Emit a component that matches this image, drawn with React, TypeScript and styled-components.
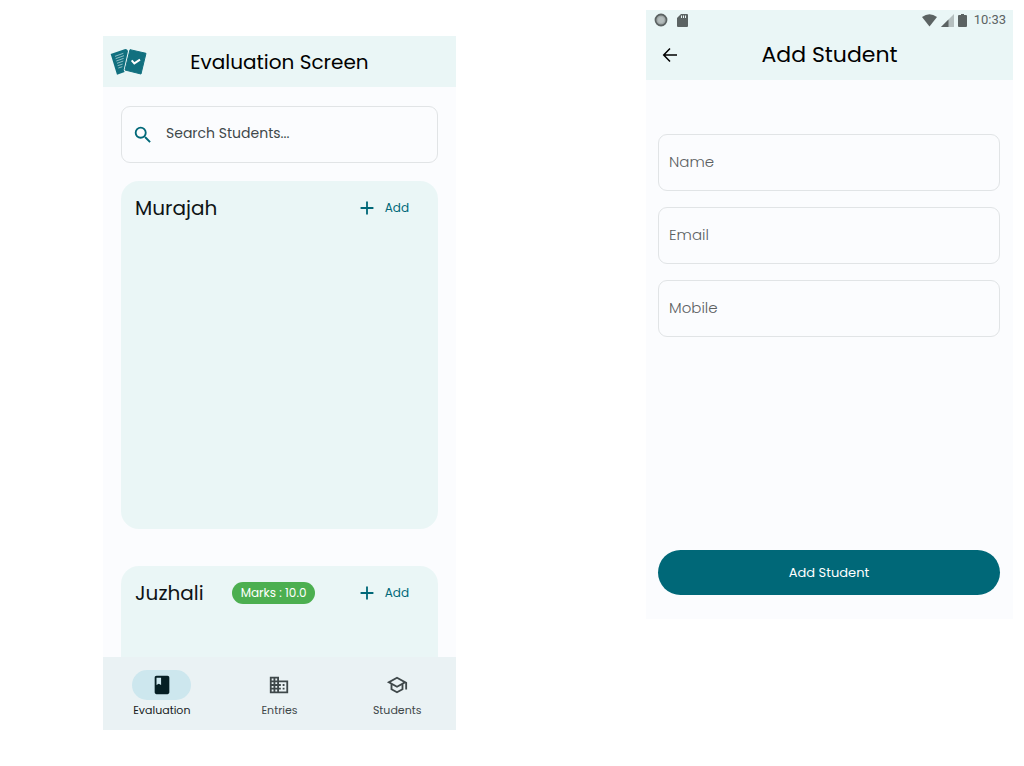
import React from 'react';
import styled, { createGlobalStyle } from 'styled-components';
import { MdAdd, MdBook, MdDomain, MdOutlineSchool, MdSearch } from 'react-icons/md';

const GlobalStyle = createGlobalStyle`
  *, *::before, *::after { box-sizing: border-box; }
  body {
    margin: 0;
    background: #ffffff;
    color: #0f1415;
    font-family: Poppins, Inter, sans-serif;
  }
  button, input { font: inherit; }
  h1, h2, p { margin: 0; font-weight: 400; }
`;

const mint = '#eaf6f6';
const teal = '#006878';

const Page = styled.main`
  display: grid;
  grid-template-columns: 353fr 367fr;
  column-gap: 190px;
  align-items: start;
  padding: 10px 11px 36px 103px;
`;

const Phone = styled.section<{ $offset?: boolean }>`
  display: flex;
  flex-direction: column;
  min-width: 0;
  margin-top: ${(p) => (p.$offset ? '26px' : '0')};
  background: #fbfcfe;
`;

const AppBar = styled.header<{ $height: number }>`
  display: grid;
  grid-template-columns: 1fr auto 1fr;
  align-items: center;
  height: ${(p) => p.$height}px;
  padding: 0 7px;
  background: ${mint};
`;

const Title = styled.h1<{ $size: number }>`
  color: #000000;
  font-size: ${(p) => p.$size}px;
  line-height: 32px;
`;

const BackButton = styled.button`
  display: flex;
  justify-self: start;
  padding: 9px;
  border: 0;
  background: none;
  cursor: pointer;
`;

const Content = styled.div`
  display: flex;
  flex-direction: column;
  padding: 19px 18px 0;
`;

const SearchBox = styled.label`
  display: flex;
  align-items: center;
  gap: 12px;
  height: 57px;
  margin-bottom: 18px;
  padding: 0 10px;
  border: 1px solid #e1e4e6;
  border-radius: 9px;
  color: ${teal};
`;

const SearchInput = styled.input`
  flex: 1;
  min-width: 0;
  padding: 0 0 2px;
  border: 0;
  outline: 0;
  background: none;
  color: #3f484a;
  font-size: 14px;
  &::placeholder { color: #3f484a; opacity: 1; }
`;

const Card = styled.article<{ $continues?: boolean }>`
  min-height: ${(p) => (p.$continues ? '91px' : '348px')};
  padding: 11px 17px 0 14px;
  border-radius: ${(p) => (p.$continues ? '18px 18px 0 0' : '18px')};
  background: ${mint};
  & + & { margin-top: 37px; }
`;

const CardHeader = styled.div`
  display: flex;
  align-items: center;
  gap: 28px;
  height: 32px;
`;

const CardTitle = styled.h2`
  font-size: 20px;
  line-height: 32px;
`;

const MarksBadge = styled.p`
  padding: 0 9px;
  border-radius: 11px;
  background: #4caf50;
  color: #ffffff;
  font-size: 12px;
  line-height: 22px;
  white-space: nowrap;
`;

const AddButton = styled.button`
  display: flex;
  align-items: center;
  gap: 7px;
  margin-left: auto;
  padding: 4px 12px;
  border: 0;
  background: none;
  color: ${teal};
  font-size: 12px;
  line-height: 20px;
  cursor: pointer;
`;

const NavBar = styled.nav`
  display: grid;
  grid-template-columns: repeat(3, 1fr);
  height: 73px;
  padding-top: 13px;
  background: #eaf2f4;
`;

const NavItem = styled.a<{ $active?: boolean }>`
  display: flex;
  flex-direction: column;
  align-items: center;
  gap: 2px;
  color: ${(p) => (p.$active ? '#191c1d' : '#3f484a')};
  font-size: 11px;
  line-height: 16px;
  text-decoration: none;
`;

const NavPill = styled.span<{ $active?: boolean }>`
  display: flex;
  align-items: center;
  justify-content: center;
  width: 59px;
  height: 30px;
  border-radius: 15px;
  background: ${(p) => (p.$active ? '#cde7ee' : 'transparent')};
  color: ${(p) => (p.$active ? '#051f24' : '#3f484a')};
`;

const StatusBar = styled.div`
  display: flex;
  align-items: center;
  justify-content: space-between;
  height: 20px;
  padding: 0 7px 0 8px;
  background: ${mint};
  color: #5c6363;
`;

const StatusGroup = styled.div<{ $gap: number }>`
  display: flex;
  align-items: center;
  gap: ${(p) => p.$gap}px;
`;

const Clock = styled.time`
  margin-left: 3px;
  font-family: Roboto, sans-serif;
  font-size: 13px;
  line-height: 20px;
`;

const Form = styled.form`
  display: flex;
  flex-direction: column;
  gap: 16px;
  padding: 54px 13px 24px 12px;
`;

const Field = styled.input`
  width: 100%;
  height: 57px;
  padding: 0 10px 2px;
  border: 1px solid #e1e4e6;
  border-radius: 9px;
  background: none;
  color: #191c1d;
  font-size: 15px;
  font-weight: 300;
  &::placeholder { color: #5c6062; opacity: 1; }
`;

const SubmitButton = styled.button`
  height: 45px;
  margin-top: 197px;
  border: 0;
  border-radius: 23px;
  background: ${teal};
  color: #ffffff;
  font-size: 13px;
  cursor: pointer;
`;

const Logo = () => (
  <svg width="37" height="28" viewBox="0 0 111 84" aria-hidden="true">
    <path d="M2 18 46 3q6 0 8 6L41 66l3 6-23 8Z" fill="#11707f" />
    <path d="m60 5 48 11-15 62-48-12Z" fill="#11707f" stroke="#11707f" strokeWidth="3" strokeLinejoin="round" />
    <g stroke="#cfe6e8" strokeWidth="2" fill="none">
      <path d="m15 25 25-9M17 32l25-9M19 39l22-8M21 46l19-7M23 53l15-5M25 60l12-4" />
    </g>
    <path d="m65 37 8 9 17-11" stroke="#ffffff" strokeWidth="6" fill="none" />
  </svg>
);

const BackArrow = () => (
  <svg width="16" height="16" viewBox="0 0 16 16" fill="none" stroke="#000000" strokeWidth="1.5" aria-hidden="true">
    <path d="M15 8H2M8 1.500 1.700 8 8 14.500" />
  </svg>
);

const RecordIcon = () => (
  <svg width="14" height="14" viewBox="0 0 14 14" aria-hidden="true">
    <circle cx="7" cy="7" r="5.500" fill="#a3aaaa" stroke="#5c6363" strokeWidth="1.800" />
    <circle cx="7" cy="7" r="3" fill="#b5bdbd" />
  </svg>
);

const SdCardIcon = () => (
  <svg width="11" height="13" viewBox="0 0 11 13" aria-hidden="true">
    <path d="M4 0h6q1 0 1 1v11q0 1-1 1H1q-1 0-1-1V4Z" fill="currentColor" />
    <path d="M4.500 1.500v2.500M6.500 1.500v2.500M8.500 1.500v2.500" stroke={mint} strokeWidth="1" />
  </svg>
);

const WifiIcon = () => (
  <svg width="15" height="13" viewBox="0 0 15 13" aria-hidden="true">
    <path d="M0 3Q7.500-2.500 15 3L7.500 12.500Z" fill="currentColor" />
  </svg>
);

const SignalIcon = () => (
  <svg width="13" height="13" viewBox="0 0 13 13" aria-hidden="true">
    <path d="M13 0v13H0Z" fill="#b5bfbf" />
    <path d="M7.500 5.500V13H0Z" fill="currentColor" />
  </svg>
);

const BatteryIcon = () => (
  <svg width="9" height="13" viewBox="0 0 9 13" aria-hidden="true">
    <path d="M3 0h3v1h2q1 0 1 1V12q0 1-1 1H1q-1 0-1-1V2q0-1 1-1h2Z" fill="currentColor" />
  </svg>
);

const navItems = [
  { label: 'Evaluation', Icon: MdBook, active: true },
  { label: 'Entries', Icon: MdDomain, active: false },
  { label: 'Students', Icon: MdOutlineSchool, active: false },
];

const cards = [
  { title: 'Murajah', marks: '', continues: false },
  { title: 'Juzhali', marks: '10.0', continues: true },
];

const fields = [
  { label: 'Name', type: 'text' },
  { label: 'Email', type: 'email' },
  { label: 'Mobile', type: 'tel' },
];

const EvaluationScreen = () => (
  <Phone $offset>
    <AppBar $height={51}>
      <Logo />
      <Title $size={20}>Evaluation Screen</Title>
    </AppBar>
    <Content>
      <SearchBox>
        <MdSearch size={22} aria-hidden="true" />
        <SearchInput type="text" placeholder="Search Students..." aria-label="Search Students" />
      </SearchBox>
      {cards.map((card) => (
        <Card key={card.title} $continues={card.continues}>
          <CardHeader>
            <CardTitle>{card.title}</CardTitle>
            {card.marks && <MarksBadge>Marks : {card.marks}</MarksBadge>}
            <AddButton type="button">
              <MdAdd size={22} aria-hidden="true" />
              Add
            </AddButton>
          </CardHeader>
        </Card>
      ))}
    </Content>
    <NavBar>
      {navItems.map(({ label, Icon, active }) => (
        <NavItem key={label} href={`#${label.toLowerCase()}`} $active={active}>
          <NavPill $active={active}>
            <Icon size={22} aria-hidden="true" />
          </NavPill>
          {label}
        </NavItem>
      ))}
    </NavBar>
  </Phone>
);

const AddStudentScreen = () => (
  <Phone>
    <StatusBar>
      <StatusGroup $gap={9}>
        <RecordIcon />
        <SdCardIcon />
      </StatusGroup>
      <StatusGroup $gap={4}>
        <WifiIcon />
        <SignalIcon />
        <BatteryIcon />
        <Clock>10:33</Clock>
      </StatusGroup>
    </StatusBar>
    <AppBar $height={50}>
      <BackButton type="button" aria-label="Back">
        <BackArrow />
      </BackButton>
      <Title $size={22}>Add Student</Title>
    </AppBar>
    <Form onSubmit={(event) => event.preventDefault()}>
      {fields.map(({ label, type }) => (
        <Field key={label} type={type} placeholder={label} aria-label={label} />
      ))}
      <SubmitButton type="submit">Add Student</SubmitButton>
    </Form>
  </Phone>
);

export default function App() {
  return (
    <>
      <GlobalStyle />
      <Page>
        <EvaluationScreen />
        <AddStudentScreen />
      </Page>
    </>
  );
}
